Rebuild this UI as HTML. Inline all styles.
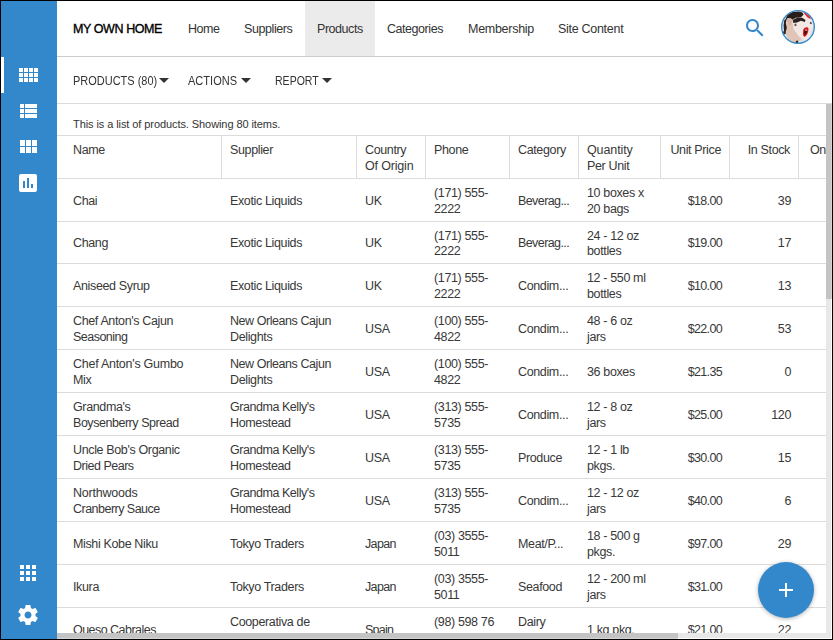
<!DOCTYPE html>
<html>
<head>
<meta charset="utf-8">
<title>Products</title>
<style>
*{box-sizing:border-box;margin:0;padding:0}
html,body{width:833px;height:640px;overflow:hidden;background:#fff}
body{font-family:"Liberation Sans",sans-serif;color:#333;font-size:12.5px;position:relative}
#frame{position:absolute;left:0;top:0;width:833px;height:640px;border:1px solid #000;z-index:50;pointer-events:none}
#side{position:absolute;left:1px;top:1px;width:56px;height:638px;background:#3388cb}
#side .sel{position:absolute;left:0;top:56px;width:3px;height:36px;background:#fff}
#side svg{position:absolute;left:0}
#hdr{position:absolute;left:57px;top:1px;width:775px;height:56px;border-bottom:1px solid #ccc;background:#fff}
#hdr .tab{position:absolute;left:248px;top:0;width:70px;height:55px;background:#ebebeb}
#hdr span{position:absolute;top:20px;line-height:16px;font-size:12.5px;white-space:nowrap;color:#333}
#hdr .brand{font-weight:normal;color:#000;-webkit-text-stroke:0.35px #000}
#tb{position:absolute;left:57px;top:57px;width:775px;height:47px;border-bottom:1px solid #dcdcdc}
#tb span{position:absolute;top:16px;line-height:16px;font-size:13px;transform-origin:0 50%;white-space:nowrap;color:#333}
#tb i{position:absolute;top:21px;width:0;height:0;border-left:5px solid transparent;border-right:5px solid transparent;border-top:5px solid #333}
#info{position:absolute;left:73px;top:117px;font-size:11px;letter-spacing:-0.08px;line-height:14px;color:#333;white-space:nowrap}
#grid{position:absolute;left:57px;top:135px;width:769px;height:498px;overflow:hidden}
.row{position:absolute;left:0;width:780px;border-top:1px solid #dcdcdc;height:43px}
.c{position:absolute;top:0;bottom:0;display:flex;align-items:center;padding:2px 8px 0;line-height:16px;font-size:12.5px;letter-spacing:-0.36px;color:#383838;white-space:nowrap}
.h .c{align-items:flex-start;padding-top:6px;bottom:auto;height:42px;border-right:1px solid #dcdcdc}
.c1{left:0;width:165px;padding-left:16px}
.c2{left:165px;width:135px}
.c3{left:300px;width:69px}
.c4{left:369px;width:84px}
.c5{left:453px;width:69px}
.c6{left:522px;width:82px}
.c7{left:604px;width:69px;justify-content:flex-end;text-align:right}
.c8{left:673px;width:69px;justify-content:flex-end;text-align:right}
.row:not(.h) .c7{letter-spacing:-0.66px}
.r42 .c{padding-top:0}
.r42 .two{padding-top:3px;line-height:15px}
.c9{left:742px;width:120px;padding-left:11px;justify-content:flex-end}
.h .c9{justify-content:flex-start}
.vs{position:absolute;left:826px;top:104px;width:5px;height:529px;background:#e8e8e8}
.vs b{position:absolute;left:0;top:0;width:6px;height:195px;background:linear-gradient(90deg,#c4c4c4 5px,#d4d4d4 5px)}
.hs{position:absolute;left:57px;top:633px;width:774px;height:5px;background:#e8e8e8}
.hs b{position:absolute;left:0;top:0;width:621px;height:6px;background:linear-gradient(180deg,#c4c4c4 5px,#d4d4d4 5px)}
#fab{position:absolute;left:758px;top:562px;width:56px;height:56px;border-radius:50%;background:#3388cb;box-shadow:0 1px 4px rgba(0,0,0,.3)}
#fab:before{content:"";position:absolute;left:21px;top:27px;width:14px;height:2px;background:#fff}
#fab:after{content:"";position:absolute;left:27px;top:21px;width:2px;height:14px;background:#fff}
</style>
</head>
<body>
<div id="side"><div class="sel"></div>
<svg style="top:62px" width="56" height="24" viewBox="-15 0 56 24"><path fill="#fff" d="M3 9h4V5H3v4zm0 5h4v-4H3v4zm5 0h4v-4H8v4zm5 0h4v-4h-4v4zM8 9h4V5H8v4zm5-4v4h4V5h-4zm5 9h4v-4h-4v4zM3 19h4v-4H3v4zm5 0h4v-4H8v4zm5 0h4v-4h-4v4zm5 0h4v-4h-4v4zm0-14v4h4V5h-4z"/></svg>
<svg style="top:98px" width="56" height="24" viewBox="-15 0 56 24"><path fill="#fff" d="M4 14h4v-4H4v4zm0 5h4v-4H4v4zM4 9h4V5H4v4zm5 5h12v-4H9v4zm0 5h12v-4H9v4zM9 5v4h12V5H9z"/></svg>
<svg style="top:134px" width="56" height="24" viewBox="-15 0 56 24"><path fill="#fff" d="M4 11h5V5H4v6zm0 7h5v-6H4v6zm6 0h5v-6h-5v6zm6 0h5v-6h-5v6zm-6-7h5V5h-5v6zm6-6v6h5V5h-5z"/></svg>
<svg style="top:170px" width="56" height="24" viewBox="-15 0 56 24"><path fill="#fff" d="M19 3H5c-1.1 0-2 .9-2 2v14c0 1.1.9 2 2 2h14c1.1 0 2-.9 2-2V5c0-1.1-.9-2-2-2zM9 17H7v-7h2v7zm4 0h-2V7h2v10zm4 0h-2v-4h2v4z"/></svg>
<svg style="top:560px" width="56" height="24" viewBox="-15 0 56 24"><path fill="#fff" d="M4 8h4V4H4v4zm6 12h4v-4h-4v4zm-6 0h4v-4H4v4zm0-6h4v-4H4v4zm6 0h4v-4h-4v4zm6-10v4h4V4h-4zm-6 4h4V4h-4v4zm6 6h4v-4h-4v4zm0 6h4v-4h-4v4z"/></svg>
<svg style="top:602px" width="56" height="24" viewBox="-15 0 56 24"><path fill="#fff" d="M19.43 12.98c.04-.32.07-.64.07-.98s-.03-.66-.07-.98l2.110-1.650c.19-.15.24-.42.12-.64l-2-3.460c-.12-.22-.39-.3-.61-.22l-2.490 1c-.52-.4-1.080-.73-1.690-.98l-.38-2.650C14.460 2.180 14.250 2 14 2h-4c-.25 0-.46.180-.49.420l-.38 2.650c-.61.250-1.170.59-1.690.98l-2.490-1c-.23-.09-.49 0-.61.220l-2 3.460c-.13.220-.07.490.12.640l2.110 1.650c-.04.320-.07.650-.07.980s.03.660.07.980l-2.110 1.650c-.19.150-.24.420-.12.640l2 3.460c.12.220.39.300.61.220l2.490-1c.52.400 1.080.73 1.690.98l.38 2.650c.03.240.24.420.49.420h4c.25 0 .46-.18.490-.42l.38-2.650c.61-.25 1.170-.59 1.690-.98l2.490 1c.23.090.49 0 .61-.22l2-3.460c.12-.22.070-.49-.12-.64l-2.110-1.650zM12 15.500c-1.930 0-3.500-1.570-3.500-3.500s1.570-3.500 3.500-3.500 3.500 1.570 3.500 3.500-1.570 3.500-3.500 3.500z"/></svg>
</div>
<div id="hdr">
  <div class="tab"></div>
  <span class="brand" style="left:16px;letter-spacing:-0.41px">MY OWN HOME</span>
  <span style="left:131px;letter-spacing:-0.46px">Home</span>
  <span style="left:187px;letter-spacing:-0.41px">Suppliers</span>
  <span style="left:260px;letter-spacing:-0.45px">Products</span>
  <span style="left:330px;letter-spacing:-0.45px">Categories</span>
  <span style="left:411px;letter-spacing:-0.28px">Membership</span>
  <span style="left:501px;letter-spacing:-0.29px">Site Content</span>
</div>
<div id="tb">
  <span style="left:16px;transform:scaleX(.845)">PRODUCTS (80)</span><i style="left:102px"></i>
  <span style="left:131px;transform:scaleX(.85)">ACTIONS</span><i style="left:184px"></i>
  <span style="left:218px;transform:scaleX(.81)">REPORT</span><i style="left:265px"></i>
</div>
<div id="info">This is a list of products. Showing 80 items.</div>
<div id="grid">
  <div class="row h" style="top:0">
    <div class="c c1">Name</div><div class="c c2">Supplier</div><div class="c c3"><span>Country<br><span style="letter-spacing:-0.17px">Of Origin</span></span></div><div class="c c4">Phone</div><div class="c c5">Category</div><div class="c c6"><span><span style="letter-spacing:-0.11px">Quantity</span><br>Per Unit</span></div><div class="c c7">Unit Price</div><div class="c c8">In Stock</div><div class="c c9">On Order</div>
  </div>
  <div class="row" style="top:43px;height:43px"><div class="c c1"><span>Chai</span></div><div class="c c2"><span>Exotic Liquids</span></div><div class="c c3"><span>UK</span></div><div class="c c4 two"><span>(171) 555-<br>2222</span></div><div class="c c5"><span><span style="letter-spacing:-0.59px">Beverag...</span></span></div><div class="c c6 two"><span>10 boxes x<br>20 bags</span></div><div class="c c7"><span>$18.00</span></div><div class="c c8"><span>39</span></div><div class="c c9"><span>0</span></div></div>
  <div class="row r42" style="top:86px;height:42px"><div class="c c1"><span>Chang</span></div><div class="c c2"><span>Exotic Liquids</span></div><div class="c c3"><span>UK</span></div><div class="c c4 two"><span>(171) 555-<br>2222</span></div><div class="c c5"><span><span style="letter-spacing:-0.59px">Beverag...</span></span></div><div class="c c6 two"><span>24 - 12 oz<br>bottles</span></div><div class="c c7"><span>$19.00</span></div><div class="c c8"><span>17</span></div><div class="c c9"><span>40</span></div></div>
  <div class="row" style="top:128px;height:43px"><div class="c c1"><span>Aniseed Syrup</span></div><div class="c c2"><span>Exotic Liquids</span></div><div class="c c3"><span>UK</span></div><div class="c c4 two"><span>(171) 555-<br>2222</span></div><div class="c c5"><span>Condim...</span></div><div class="c c6 two"><span>12 - 550 ml<br>bottles</span></div><div class="c c7"><span>$10.00</span></div><div class="c c8"><span>13</span></div><div class="c c9"><span>70</span></div></div>
  <div class="row" style="top:171px;height:43px"><div class="c c1 two"><span>Chef Anton's Cajun<br><span style="letter-spacing:-0.52px">Seasoning</span></span></div><div class="c c2 two"><span><span style="letter-spacing:-0.44px">New Orleans Cajun</span><br>Delights</span></div><div class="c c3"><span>USA</span></div><div class="c c4 two"><span>(100) 555-<br>4822</span></div><div class="c c5"><span>Condim...</span></div><div class="c c6 two"><span>48 - 6 oz<br>jars</span></div><div class="c c7"><span>$22.00</span></div><div class="c c8"><span>53</span></div><div class="c c9"><span>0</span></div></div>
  <div class="row" style="top:214px;height:43px"><div class="c c1 two"><span><span style="letter-spacing:-0.26px">Chef Anton's Gumbo</span><br>Mix</span></div><div class="c c2 two"><span><span style="letter-spacing:-0.44px">New Orleans Cajun</span><br>Delights</span></div><div class="c c3"><span>USA</span></div><div class="c c4 two"><span>(100) 555-<br>4822</span></div><div class="c c5"><span>Condim...</span></div><div class="c c6"><span>36 boxes</span></div><div class="c c7"><span>$21.35</span></div><div class="c c8"><span>0</span></div><div class="c c9"><span>0</span></div></div>
  <div class="row" style="top:257px;height:43px"><div class="c c1 two"><span>Grandma's<br><span style="letter-spacing:-0.46px">Boysenberry Spread</span></span></div><div class="c c2 two"><span><span style="letter-spacing:-0.45px">Grandma Kelly's</span><br>Homestead</span></div><div class="c c3"><span>USA</span></div><div class="c c4 two"><span>(313) 555-<br>5735</span></div><div class="c c5"><span>Condim...</span></div><div class="c c6 two"><span>12 - 8 oz<br>jars</span></div><div class="c c7"><span>$25.00</span></div><div class="c c8"><span>120</span></div><div class="c c9"><span>0</span></div></div>
  <div class="row" style="top:300px;height:43px"><div class="c c1 two"><span>Uncle Bob's Organic<br><span style="letter-spacing:-0.49px">Dried Pears</span></span></div><div class="c c2 two"><span><span style="letter-spacing:-0.45px">Grandma Kelly's</span><br>Homestead</span></div><div class="c c3"><span>USA</span></div><div class="c c4 two"><span>(313) 555-<br>5735</span></div><div class="c c5"><span>Produce</span></div><div class="c c6 two"><span>12 - 1 lb<br>pkgs.</span></div><div class="c c7"><span>$30.00</span></div><div class="c c8"><span>15</span></div><div class="c c9"><span>0</span></div></div>
  <div class="row" style="top:343px;height:43px"><div class="c c1 two"><span><span style="letter-spacing:-0.22px">Northwoods</span><br><span style="letter-spacing:-0.52px">Cranberry Sauce</span></span></div><div class="c c2 two"><span><span style="letter-spacing:-0.45px">Grandma Kelly's</span><br>Homestead</span></div><div class="c c3"><span>USA</span></div><div class="c c4 two"><span>(313) 555-<br>5735</span></div><div class="c c5"><span>Condim...</span></div><div class="c c6 two"><span>12 - 12 oz<br>jars</span></div><div class="c c7"><span>$40.00</span></div><div class="c c8"><span>6</span></div><div class="c c9"><span>0</span></div></div>
  <div class="row" style="top:386px;height:43px"><div class="c c1"><span>Mishi Kobe Niku</span></div><div class="c c2"><span>Tokyo Traders</span></div><div class="c c3"><span><span style="letter-spacing:-0.64px">Japan</span></span></div><div class="c c4 two"><span>(03) 3555-<br>5011</span></div><div class="c c5"><span>Meat/P...</span></div><div class="c c6 two"><span>18 - 500 g<br>pkgs.</span></div><div class="c c7"><span>$97.00</span></div><div class="c c8"><span>29</span></div><div class="c c9"><span>0</span></div></div>
  <div class="row" style="top:429px;height:43px"><div class="c c1"><span>Ikura</span></div><div class="c c2"><span>Tokyo Traders</span></div><div class="c c3"><span><span style="letter-spacing:-0.64px">Japan</span></span></div><div class="c c4 two"><span>(03) 3555-<br>5011</span></div><div class="c c5"><span>Seafood</span></div><div class="c c6 two"><span>12 - 200 ml<br>jars</span></div><div class="c c7"><span>$31.00</span></div><div class="c c8"><span>31</span></div><div class="c c9"><span>0</span></div></div>
  <div class="row" style="top:472px;height:43px"><div class="c c1"><span><span style="letter-spacing:-0.53px">Queso Cabrales</span></span></div><div class="c c2 two"><span>Cooperativa de<br>Quesos 'Las Cabras'</span></div><div class="c c3"><span><span style="letter-spacing:-0.75px">Spain</span></span></div><div class="c c4 two"><span>(98) 598 76<br>54</span></div><div class="c c5 two"><span>Dairy<br>Products</span></div><div class="c c6"><span>1 kg pkg.</span></div><div class="c c7"><span>$21.00</span></div><div class="c c8"><span>22</span></div><div class="c c9"><span>30</span></div></div>
</div>
<div class="vs"><b></b></div>
<div class="hs"><b></b></div>
<svg id="srch" style="position:absolute;left:743px;top:16px" width="24" height="24" viewBox="0 0 24 24"><path fill="#3388cb" d="M15.5 14h-.79l-.28-.27C15.410 12.590 16 11.110 16 9.500 16 5.910 13.090 3 9.500 3S3 5.910 3 9.500 5.910 16 9.500 16c1.610 0 3.090-.59 4.230-1.570l.27.28v.79l5 4.990L20.490 19l-4.990-5zm-6 0C7.010 14 5 11.990 5 9.500S7.010 5 9.500 5 14 7.010 14 9.500 11.990 14 9.500 14z"/></svg>
<svg id="ava" style="position:absolute;left:781px;top:10px" width="34" height="34" viewBox="0 0 34 34">
<defs><clipPath id="avc"><circle cx="17" cy="17" r="16"/></clipPath><filter id="avb" x="-10%" y="-10%" width="120%" height="120%"><feGaussianBlur stdDeviation="0.55"/></filter></defs>
<g clip-path="url(#avc)"><g filter="url(#avb)">
<rect x="-2" y="-2" width="38" height="38" fill="#dde0e5"/>
<path d="M6 9 L13 9 L22 26 L19 31 L16.500 31 L11.500 34.500 L3.500 22 L5 18 Z" fill="#e0c5b7"/>
<path d="M11 9 L16 5 L23 3 L31 9 L32 17 L29.500 22 L28 29 L24 30.500 L18 26.500 L12.500 19 Z" fill="#f3e8e3"/>
<path d="M4.800 9.100 L6.200 4.500 L11.400 1.900 L18 1.600 L21.300 2.600 L22.600 4.500 L20 7.200 L14.700 7.800 L11.400 9.800 L10.100 8.500 L6.800 8.100 L5.500 9.800 L4.800 13.100 L5.800 17.700 L4.800 21.600 L3.200 22.300 L2.600 15.700 L3.200 10.400 Z" fill="#2a1d19"/>
<path d="M6.200 9.100 L10.100 8.500 L10.800 12.400 L9.100 15.400 L7.100 14.400 Z" fill="#d9b3a3"/>
<path d="M11.700 10.100 L16.700 7.500 L21.300 7.800 L24.500 10.100 L23.900 12.100 L20 10.800 L16 12.400 L12.400 13.100 Z" fill="#2b2322"/>
<path d="M13.400 13.900 l1.800 -.4 l.4 2.200 l-1.800 .6z" fill="#6a4a42"/>
<path d="M29 12.100 l1.800 .6 l-.3 1.300 l-1.600 -.6z" fill="#241b1b"/>
<path d="M22.200 2.200 L24.500 1.900 L29.800 7.200 L29.500 9.100 L26.500 7.500 Z" fill="#e8262b"/>
<path d="M22.300 19.500 Q23.500 17 26.500 17.300 Q28.200 18 27.300 21 Q26.300 25.500 23.800 26.800 Q21.800 26.500 22 23 Z" fill="#d9181f"/>
<path d="M23.500 20.500 Q24.500 19 26 19.500 Q26.300 21 25.500 23 Q24.500 25 23.500 25 Q23 23 23.500 20.500Z" fill="#3a0d10"/>
<path d="M24.300 19.500 l1.800 .3 l-.3 1 l-1.700 -.3z" fill="#f4eeee"/>
<path d="M14.800 31 L17 30.500 L17.500 35 L14.500 35 Z" fill="#2a2424"/>
<path d="M2 21.500 L4.500 21 L5 23.500 L2 25 Z" fill="#30282a"/>
</g></g>
<circle cx="17" cy="17" r="16.350" fill="none" stroke="#3388cb" stroke-width="1.300"/>
</svg>
<div id="fab"></div>
<div id="frame"></div>
</body>
</html>
